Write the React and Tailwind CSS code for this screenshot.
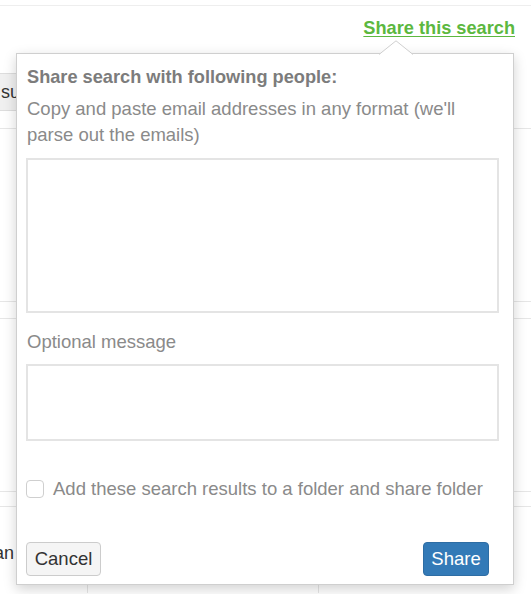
export default function App() {
  return (
    <div className="relative h-[594px] w-[531px] overflow-hidden bg-white font-['Liberation_Sans',Arial,sans-serif] text-[#333]">
      {/* page behind the popover */}
      <div className="mt-[5px] border-t border-[#eee]" />
      <div className="flex justify-end pr-[16px] pt-[10px]">
        <a href="#" className="text-[18.2px] font-bold leading-[24px] text-[#5cb83f] underline underline-offset-[2px]">
          Share this search
        </a>
      </div>
      <div className="mt-[33px] flex h-[38px] items-center -ml-[46px] w-[120px] rounded border border-[#ddd] bg-[#f0f0f0] pl-[46px] text-[18px]">
        su
      </div>
      <div className="mt-[17px] border-t border-[#e6e6e6]" />
      <div className="mt-[172px] border-t border-[#e6e6e6]" />
      <div className="mt-[16px] border-t border-[#e6e6e6]" />
      <div className="mt-[172px] border-t border-[#e6e6e6]" />
      <div className="mt-[14px] border-t border-[#e6e6e6]" />
      <div className="flex h-[86px]">
        <div className="flex w-[110px] items-start border-r border-[#e6e6e6] pt-[33px] -ml-[22px] text-[18px]">
          <span>Plan</span>
        </div>
        <div className="w-[231px] border-r border-[#e6e6e6]" />
      </div>

      {/* popover */}
      <div className="absolute left-[16px] top-[53px] flex h-[532px] w-[498px] flex-col border border-[#cfcfcf] bg-white px-[9px] pt-[10px] shadow-[0_4px_12px_rgba(0,0,0,0.18)]">
        <svg className="absolute -top-[14px] left-[362px]" width="34" height="15" viewBox="0 0 34 15">
          <path d="M0 14.5 L17 0.8 L34 14.5" fill="white" stroke="#cfcfcf" strokeWidth="1" />
        </svg>
        <div className="pl-[1px] text-[18.2px] font-bold leading-[26px] text-[#7c7c7c]">
          Share search with following people:
        </div>
        <div className="mt-[6px] w-[440px] pl-[1px] text-[18.5px] leading-[26px] text-[#8a8a8a]">
          Copy and paste email addresses in any format (we'll parse out the emails)
        </div>
        <textarea className="mt-[10px] h-[155px] w-[473px] resize-none border-2 border-[#e4e4e4] bg-white outline-none" />
        <div className="mt-[16px] pl-[1px] text-[18.5px] leading-[26px] text-[#8a8a8a]">Optional message</div>
        <textarea className="mt-[9px] h-[77px] w-[473px] resize-none border-2 border-[#e4e4e4] bg-white outline-none" />
        <label className="mt-[39px] flex items-center gap-[9px] whitespace-nowrap text-[18.5px] leading-[18px] text-[#8a8a8a]">
          <span className="h-[18px] w-[18px] shrink-0 rounded-[4px] border border-[#cfcfcf] bg-white" />
          Add these search results to a folder and share folder
        </label>
        <div className="mt-[44px] flex items-center justify-between pr-[15px]">
          <button className="h-[34px] w-[75px] rounded-[4px] border border-[#ccc] bg-[#f5f5f5] text-[18.5px] text-[#333]">
            Cancel
          </button>
          <button className="h-[34px] w-[66px] rounded-[4px] border border-[#2e6da4] bg-[#337ab7] text-[18.5px] text-white">
            Share
          </button>
        </div>
      </div>
    </div>
  );
}
